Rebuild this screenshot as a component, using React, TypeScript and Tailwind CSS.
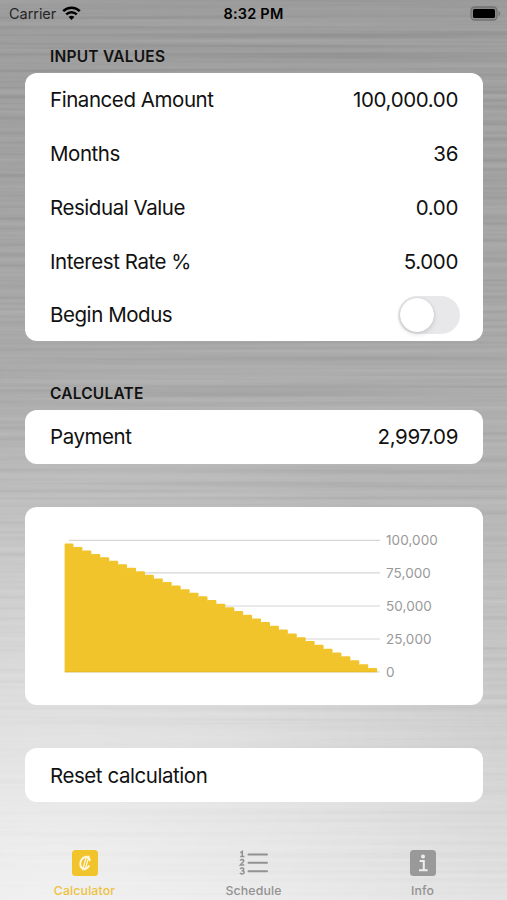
import type { ReactNode } from "react";

const AMOUNT = 100000;
const MONTHS = 36;
const RATE = 0.05 / 12;
const PAYMENT = 2997.09;

// Remaining balance after each payment, without the final zero.
const balances = Array.from({ length: MONTHS - 1 }, (_, i) => {
  const growth = Math.pow(1 + RATE, i + 1);
  return AMOUNT * growth - (PAYMENT * (growth - 1)) / RATE;
});

const inputs = [
  { label: "Financed Amount", value: "100,000.00" },
  { label: "Months", value: "36" },
  { label: "Residual Value", value: "0.00" },
  { label: "Interest Rate %", value: "5.000" },
];

function BrushedMetal() {
  return (
    <svg className="absolute inset-0 -z-10 h-full w-full" aria-hidden="true">
      <defs>
        <linearGradient id="metal" x1="0" y1="0" x2="0" y2="1">
          <stop offset="0" stopColor="#9c9c9c" />
          <stop offset="0.2" stopColor="#a2a2a2" />
          <stop offset="0.4" stopColor="#aaaaaa" />
          <stop offset="0.54" stopColor="#b4b4b4" />
          <stop offset="0.68" stopColor="#c0c0c0" />
          <stop offset="0.8" stopColor="#cccccc" />
          <stop offset="0.92" stopColor="#d8d8d8" />
          <stop offset="1" stopColor="#e0e0e0" />
        </linearGradient>
        <radialGradient id="sheen" gradientUnits="userSpaceOnUse" cx="60" cy="900" r="500">
          <stop offset="0" stopColor="#fff" stopOpacity="0.55" />
          <stop offset="0.45" stopColor="#fff" stopOpacity="0.35" />
          <stop offset="1" stopColor="#fff" stopOpacity="0" />
        </radialGradient>
        <filter id="brush" x="0" y="0" width="100%" height="100%" colorInterpolationFilters="sRGB">
          <feTurbulence type="fractalNoise" baseFrequency="0.0018 0.19" numOctaves="3" seed="21" />
          <feColorMatrix values="1 0 0 0 0  1 0 0 0 0  1 0 0 0 0  0 0 0 0 1" />
        </filter>
      </defs>
      <rect width="100%" height="100%" fill="url(#metal)" />
      <rect width="100%" height="100%" fill="url(#sheen)" />
      <rect width="100%" height="100%" filter="url(#brush)" className="opacity-30 mix-blend-soft-light" />
    </svg>
  );
}

function StatusBar() {
  return (
    <header className="grid h-[27px] grid-cols-3 items-center pr-[6px] pl-[9px] text-[14.5px] leading-none text-black">
      <div className="flex items-center gap-[6px]">
        <span className="relative top-px tracking-[-0.05px] text-[#262626]">Carrier</span>
        <svg width="19" height="15" viewBox="0 0 19 15" fill="none" stroke="#000" strokeWidth="2.5">
          <path d="M1.2 5.2a11.7 11.7 0 0 1 16.6 0" />
          <path d="M4.2 8.4a7.5 7.5 0 0 1 10.6 0" />
          <path d="M6.6 11a4 4 0 0 1 5.8 0L9.5 14Z" fill="#000" stroke="none" />
        </svg>
      </div>
      <span className="relative top-px -left-[1.5px] text-center font-semibold tracking-[0.2px] whitespace-nowrap">
        8:32 PM
      </span>
      <svg className="justify-self-end" width="31" height="15" viewBox="0 0 31 15">
        <rect x="1" y="1" width="26" height="13" rx="3.5" fill="#000" fillOpacity="0.12" stroke="#737373" strokeWidth="1.3" />
        <rect x="3" y="3" width="22" height="9" rx="1.6" fill="#000" />
        <path d="M28.5 5v5c1-.3 1.7-1.3 1.7-2.5S29.5 5.3 28.5 5Z" fill="#737373" />
      </svg>
    </header>
  );
}

function SectionTitle({ children, className }: { children: ReactNode; className: string }) {
  return (
    <h2 className={`pl-[25px] text-[15.5px] leading-[20px] font-semibold text-[#111] ${className}`}>
      {children}
    </h2>
  );
}

function Row({ label, children }: { label: string; children?: ReactNode }) {
  return (
    <div className="flex h-[53.7px] items-center justify-between pr-[24.5px] pl-[25px] text-[20.5px] whitespace-nowrap text-[#111]">
      <span className="pt-[2px] tracking-[-0.44px]">{label}</span>
      {children}
    </div>
  );
}

function Value({ children }: { children: ReactNode }) {
  return <span className="pt-[2px] tracking-[-0.36px]">{children}</span>;
}

function Toggle() {
  return (
    <span className="-mr-[2px] flex h-[38px] w-[62px] items-center rounded-full bg-[#e8e8ea] p-[2px]">
      <span className="size-[34px] rounded-full bg-white shadow-[0_2px_5px_rgba(0,0,0,0.14),0_0_1px_rgba(0,0,0,0.2)]" />
    </span>
  );
}

function BalanceChart() {
  const step = 312.6 / balances.length;
  const outline = balances
    .map((balance, i) => {
      const x = 0.6 + i * step;
      const top = 142 - (balance / AMOUNT) * 131.8;
      return `${i === 0 ? "M0.6 142" : ""}L${x} ${top + 1}q0 -1 1 -1h${step - 2.2}q1.2 0 1.2 1.2`;
    })
    .join("");
  return (
    <div className="flex h-[198px] rounded-[12px] bg-white pt-[23px] pl-[39px]">
      <svg width="318" height="150" viewBox="0 0 318 150">
        {[10.4, 42.9, 76, 109, 142].map((y, i) => (
          <line key={y} x1={i === 0 ? 5 : 1} x2="316" y1={y} y2={y} stroke="#d6d6d6" strokeWidth="1.1" />
        ))}
        <path d={`${outline}V142Z`} fill="#f2c42b" />
        <path d="M0.6 141.8H313" stroke="#e9b820" strokeWidth="0.8" />
      </svg>
      <div className="flex flex-col pt-[17px] pl-[4px] text-[13.5px] leading-[33px] tracking-[0.08px] text-[#999] -mt-[23px]">
        {["100,000", "75,000", "50,000", "25,000", "0"].map((tick) => (
          <span key={tick} className="h-[33px]">{tick}</span>
        ))}
      </div>
    </div>
  );
}

function CalculatorIcon() {
  return (
    <svg width="26" height="26" viewBox="0 0 26 26">
      <rect width="26" height="26" rx="3.5" fill="#f2c42b" />
      <g fill="none" stroke="#fff8e3" strokeWidth="2" strokeLinecap="round">
        <path d="M17.7 10.3c-.3-2-1.6-3.200-3.600-3.200-3.200 0-5.800 3-5.800 6.700 0 3 1.600 5 4.100 5 1.900 0 3.500-1 4.400-2.700" />
        <path d="M14.6 6l-4 14M17 6l-4 14" strokeWidth="1.2" />
      </g>
    </svg>
  );
}

function ScheduleIcon() {
  return (
    <svg width="30" height="28" viewBox="0 0 30 28" fill="none" stroke="#929292">
      <path d="M9.500 5.500h18.500M9.500 13.800h18.500M9.500 22.200h18.500" strokeWidth="2" strokeLinecap="round" />
      <g strokeWidth="1.5">
        <path d="M1.300 3.800L3.300 2.500v5M1.200 7.600h4.200" />
        <path d="M1.200 11.600c.4-1.300 3.600-1.500 3.600.2 0 1.200-1.800 2-3.500 4.300h4" />
        <path d="M1.200 20c.6-1.300 3.600-1.300 3.600.2 0 1.100-1 1.600-2.200 1.600 1.300 0 2.500.5 2.500 1.700 0 1.900-3.500 1.800-4.100.4" />
      </g>
    </svg>
  );
}

function InfoIcon() {
  return (
    <svg width="26" height="26" viewBox="0 0 26 26">
      <rect width="26" height="26" rx="3.5" fill="#999" />
      <circle cx="13" cy="6.500" r="2" fill="#eee" />
      <path d="M9.600 11h4.200v9M9 20.200h8.600" fill="none" stroke="#eee" strokeWidth="2" />
    </svg>
  );
}

function Tab({ label, icon, active }: { label: string; icon: ReactNode; active?: boolean }) {
  return (
    <div className={`flex flex-col items-center ${active ? "text-[#edc23c]" : "text-[#929292]"}`}>
      <span className="flex h-[28px] items-center">{icon}</span>
      <span className="mt-[6px] text-[12.3px] leading-[16px] font-medium tracking-[0.15px]">{label}</span>
    </div>
  );
}

export default function App() {
  return (
    <div className="relative isolate flex h-[900px] w-[507px] flex-col overflow-hidden bg-[#aaa] font-[Inter,'Liberation_Sans',sans-serif]">
      <BrushedMetal />
      <StatusBar />
      <main className="flex flex-col pr-[24.5px] pl-[25px]">
        <SectionTitle className="mt-[20px] tracking-[0.22px]">INPUT VALUES</SectionTitle>
        <section className="mt-[6px] h-[268px] rounded-[12px] bg-white">
          {inputs.map((row) => (
            <Row key={row.label} label={row.label}>
              <Value>{row.value}</Value>
            </Row>
          ))}
          <Row label="Begin Modus">
            <Toggle />
          </Row>
        </section>
        <SectionTitle className="mt-[43px] tracking-[0.2px]">CALCULATE</SectionTitle>
        <section className="mt-[6px] rounded-[12px] bg-white">
          <Row label="Payment">
            <Value>2,997.09</Value>
          </Row>
        </section>
        <section className="mt-[43px]">
          <BalanceChart />
        </section>
        <section className="mt-[43.5px] rounded-[12px] bg-white">
          <Row label="Reset calculation" />
        </section>
      </main>
      <nav className="mt-auto grid h-[51px] grid-cols-3">
        <Tab label="Calculator" icon={<CalculatorIcon />} active />
        <Tab label="Schedule" icon={<ScheduleIcon />} />
        <Tab label="Info" icon={<InfoIcon />} />
      </nav>
    </div>
  );
}
